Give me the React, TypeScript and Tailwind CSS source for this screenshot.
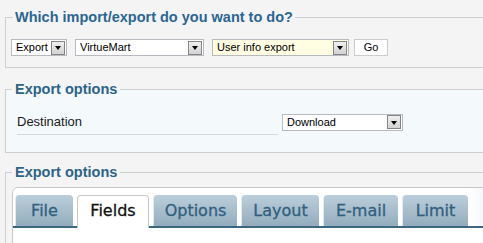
const sans = "font-['Liberation_Sans',Arial,sans-serif]"
const tabFont = "font-['DejaVu_Sans',Verdana,sans-serif]"

interface FakeSelectProps {
  value: string
  className: string
}

function FakeSelect({ value, className }: FakeSelectProps) {
  return (
    <div className={`flex h-[17px] items-center border border-[#b7bbc0] ${className}`}>
      <span className="flex-1 truncate pl-[4px] text-[11px] leading-none text-black">{value}</span>
      <span className="mr-[1px] flex h-[14px] w-[14px] items-center justify-center border border-[#858585] bg-gradient-to-b from-[#f0f0f0] to-[#d2d2d2]">
        <span className="mt-[1px] h-0 w-0 border-x-[3.5px] border-t-[4px] border-x-transparent border-t-black" />
      </span>
    </div>
  )
}

const tabs = [
  { label: 'File', width: 'w-[58px]' },
  { label: 'Fields', width: 'w-[72px]', active: true },
  { label: 'Options', width: 'w-[84px]' },
  { label: 'Layout', width: 'w-[78px]' },
  { label: 'E-mail', width: 'w-[75px]' },
  { label: 'Limit', width: 'w-[66px]' },
]

export default function App() {
  return (
    <div className={`h-[243px] w-[483px] overflow-hidden bg-[#f4f4f4] px-[5px] pt-[8px] ${sans}`}>
      <fieldset className="w-[540px] border border-[#cfcfcf] pb-[11px] pl-[5px]">
        <legend className="ml-[2px] px-[2px] text-[14.5px] font-bold leading-[18px] text-[#2b6692]">
          Which import/export do you want to do?
        </legend>
        <div className="mt-[13px] flex items-center">
          <FakeSelect value="Export" className="w-[56px] bg-white" />
          <FakeSelect value="VirtueMart" className="ml-[8px] w-[129px] bg-white" />
          <FakeSelect value="User info export" className="ml-[8px] w-[137px] bg-[#fffde2]" />
          <button className="ml-[5px] flex h-[17px] w-[34px] items-center justify-center border border-[#cbcbcb] bg-white text-[11px] leading-none text-black">
            Go
          </button>
        </div>
      </fieldset>

      <fieldset className="mt-[12px] w-[540px] border border-[#cfcfcf] bg-[#f4f9fc] pb-[17px] pl-[5px]">
        <legend className="ml-[1px] px-[3px] text-[14.5px] font-bold leading-[18px] text-[#2c6488]">
          Export options
        </legend>
        <div className="mt-[11px] flex items-center pl-[6px]">
          <div className="flex h-[26px] w-[261px] items-center border-b border-[#d4d9dd] text-[13px] leading-[16px] text-[#1a1a1a]">
            Destination
          </div>
          <FakeSelect value="Download" className="ml-[4px] w-[121px] bg-white" />
        </div>
      </fieldset>

      <fieldset className="mt-[10px] w-[540px] border border-[#cfcfcf] pl-[6px]">
        <legend className="ml-[0px] px-[3px] text-[14.5px] font-bold leading-[18px] text-[#2c6488]">
          Export options
        </legend>
        <div className="mt-[6px] h-[80px] rounded-tl-[6px] border border-[#c8c8c8] bg-white">
          <div className="flex items-end gap-[4px] rounded-tl-[6px] border-b-2 border-[#3c6780] bg-[linear-gradient(to_right,#ffffff_86%,#c6dae8)] px-[2px] pt-[7px]">
            {tabs.map((tab) =>
              tab.active ? (
                <div
                  key={tab.label}
                  className={`relative -mb-[2px] flex h-[33px] items-center justify-center rounded-t-[4px] border border-b-0 border-[#c9c9c9] bg-white pb-[2px] text-[16px] text-[#111] [-webkit-text-stroke:0.3px_#111] ${tabFont} ${tab.width}`}
                >
                  {tab.label}
                </div>
              ) : (
                <div
                  key={tab.label}
                  className={`flex h-[31px] items-center justify-center rounded-t-[4px] border-l border-[#e2ebf0] bg-gradient-to-b from-[#bccedb] to-[#93adbe] text-[16px] text-[#30607e] [-webkit-text-stroke:0.3px_#30607e] ${tabFont} ${tab.width}`}
                >
                  {tab.label}
                </div>
              ),
            )}
          </div>
        </div>
      </fieldset>
    </div>
  )
}
